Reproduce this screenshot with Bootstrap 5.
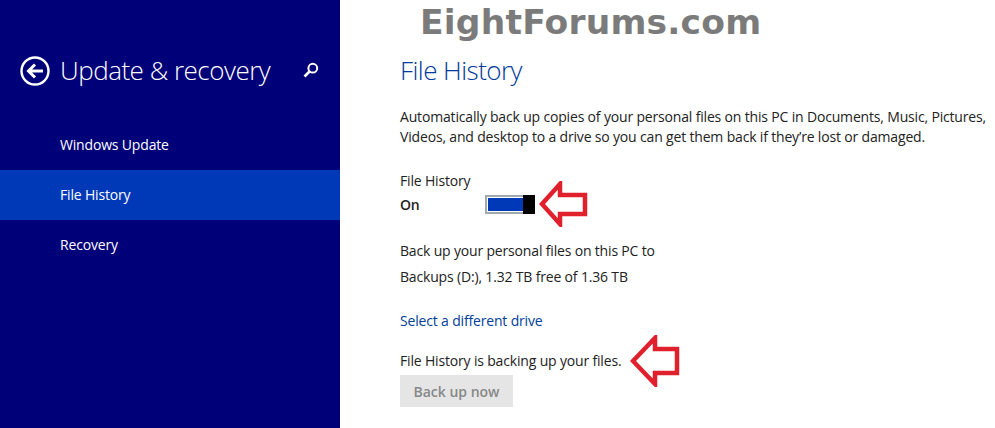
<!DOCTYPE html>
<html lang="en">
<head>
  <meta charset="UTF-8">
  <meta name="viewport" content="width=device-width, initial-scale=1.0">
  <title>File History</title>
  <link href="https://cdn.jsdelivr.net/npm/bootstrap@5.3.0/dist/css/bootstrap.min.css" rel="stylesheet">
  <style>
    html, body { height: 428px; overflow: hidden; }
    body { font-family: "Open Sans", "Noto Sans", sans-serif; font-size: 14px; letter-spacing: -.17px; color: #222; background: #fff; }
    .side-pane { width: 340px; height: 428px; background: #000078; color: #fff; flex: none; }
    .side-head { height: 120px; padding: 56px 0 0 20px; }
    .side-title { font-size: 26px; font-weight: 300; letter-spacing: -.5px; line-height: 30px; margin: -1px 0 0 10px; width: 222px; white-space: nowrap; }
    .side-item { height: 50px; line-height: 50px; padding-left: 60px; font-size: 14px; color: #fff; text-decoration: none; display: block; }
    .side-item.on { background: #0039b8; }
    .search-ico { margin: 6px 0 0 21px; flex: none; }
    .back-ico { flex: none; }
    .main-pane { padding-left: 60px; position: relative; flex: 1; }
    .watermark { font-family: "DejaVu Sans", sans-serif; font-weight: 700; font-size: 34.5px; line-height: 44px; letter-spacing: .2px; color: #7b7b7b; margin: 0 0 0 20px; }
    .page-title { font-size: 26px; font-weight: 300; letter-spacing: -.55px; line-height: 36px; color: #003a9c; margin: 8px 0 19px; }
    .txt-line { line-height: 20px; margin: 0; white-space: nowrap; }
    .gap-fh { margin-top: 24px; }
    .gap-on { margin-top: 3px; }
    .gap-target { margin-top: 26px; }
    .gap-backups { margin-top: 6px; }
    .gap-select { margin-top: 24px; }
    .gap-status { margin-top: 20px; }
    .state-label { width: 85px; }
    .toggle-box { width: 50px; height: 19px; border: 2px solid #a0a8b0; padding: 1px; position: relative; }
    .toggle-fill { height: 100%; width: 36px; background: #0039b8; }
    .toggle-thumb { position: absolute; top: -2px; right: -2px; width: 12px; height: 19px; background: #000; }
    .link-drive { color: #00409a; text-decoration: none; line-height: 20px; display: block; }
    .btn-backup, .btn-backup:disabled { display: block; width: 113px; height: 32px; margin-top: 4px; background: #e5e5e5; color: #888; border: 0; border-radius: 0; padding: 0; font-size: 14px; font-weight: 600; opacity: 1; }
    .red-arrow { position: absolute; fill: #fff; stroke: #e0202c; stroke-width: 4.5; }
    .arrow-a { left: 199px; top: 181px; }
    .arrow-b { left: 290px; top: 335px; }
  </style>
</head>
<body class="m-0">
  <div class="d-flex">
    <div class="side-pane">
      <div class="side-head d-flex align-items-start">
        <svg class="back-ico" width="30" height="30" viewBox="0 0 30 30" fill="none" stroke="#fff">
          <circle cx="15" cy="15" r="13.5" stroke-width="2.4"/>
          <path d="M23 15H9M15 8.5 8.5 15l6.5 6.5" stroke-width="3"/>
        </svg>
        <h1 class="side-title">Update &amp; recovery</h1>
        <svg class="search-ico" width="16" height="16" viewBox="0 0 16 16" fill="none" stroke="#fff">
          <circle cx="9.8" cy="6.2" r="4.4" stroke-width="2"/>
          <path d="M6.5 9.5 1.5 14.5" stroke-width="2.6"/>
        </svg>
      </div>
      <a class="side-item" href="#">Windows Update</a>
      <a class="side-item on" href="#">File History</a>
      <a class="side-item" href="#">Recovery</a>
    </div>
    <div class="main-pane">
      <div class="watermark">EightForums.com</div>
      <h2 class="page-title">File History</h2>
      <p class="txt-line">Automatically back up copies of your personal files on this PC in Documents, Music, Pictures,</p>
      <p class="txt-line">Videos, and desktop to a drive so you can get them back if they’re lost or damaged.</p>
      <p class="txt-line gap-fh">File History</p>
      <div class="d-flex align-items-center gap-on">
        <strong class="fw-semibold state-label">On</strong>
        <div class="toggle-box"><div class="toggle-fill"></div><div class="toggle-thumb"></div></div>
      </div>
      <p class="txt-line gap-target">Back up your personal files on this PC to</p>
      <p class="txt-line gap-backups">Backups (D:), 1.32 TB free of 1.36 TB</p>
      <a class="link-drive gap-select" href="#">Select a different drive</a>
      <p class="txt-line gap-status">File History is backing up your files.</p>
      <button class="btn btn-backup" disabled>Back up now</button>
      <svg class="red-arrow arrow-a" width="50" height="46" viewBox="0 0 50 46"><path d="M3 23 21 3V14H46V33H21V43Z"/></svg>
      <svg class="red-arrow arrow-b" width="50" height="52" viewBox="0 0 50 52"><path d="M3 26 25 3V14H47V38H25V49Z"/></svg>
    </div>
  </div>
  <script src="https://cdn.jsdelivr.net/npm/bootstrap@5.3.0/dist/js/bootstrap.bundle.min.js"></script>
</body>
</html>
